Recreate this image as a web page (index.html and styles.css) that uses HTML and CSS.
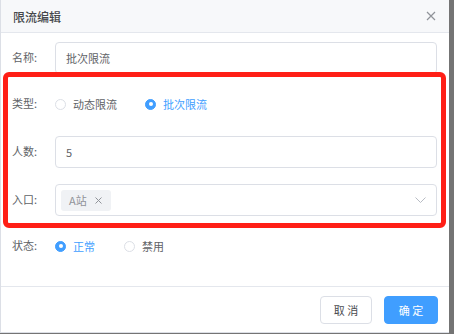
FILE: index.html
```html
<!DOCTYPE html>
<html lang="zh">
<head>
<meta charset="utf-8">
<link rel="stylesheet" href="styles.css">
</head>
<body>
<div class="page">
  <div class="dialog">
    <div class="header">
      <span class="title">限流编辑</span>
      <svg class="close" width="10" height="10" viewBox="0 0 10 10"><path d="M1 1L9 9M9 1L1 9" stroke="#909399" stroke-width="1.2" fill="none"/></svg>
    </div>
    <div class="body">
      <div class="row r-name">
        <label class="lbl">名称:</label>
        <div class="input">批次限流</div>
      </div>
      <div class="row r-type">
        <label class="lbl">类型:</label>
        <div class="radios">
          <span class="radio"><span class="dot"></span><span class="rtext">动态限流</span></span>
          <span class="radio on"><span class="dot"></span><span class="rtext">批次限流</span></span>
        </div>
      </div>
      <div class="row r-num">
        <label class="lbl">人数:</label>
        <div class="input">5</div>
      </div>
      <div class="row r-entry">
        <label class="lbl">入口:</label>
        <div class="input select">
          <span class="tag">A站<svg class="tagx" width="7" height="7" viewBox="0 0 7 7"><path d="M0.5 0.5L6.5 6.5M6.5 0.5L0.5 6.5" stroke="#909399" stroke-width="1" fill="none"/></svg></span>
          <svg class="chev" width="11" height="6" viewBox="0 0 11 6"><path d="M0.5 0.5L5.5 5.5L10.5 0.5" stroke="#b8bcc4" stroke-width="1" fill="none"/></svg>
        </div>
      </div>
      <div class="row r-status">
        <label class="lbl">状态:</label>
        <div class="radios">
          <span class="radio on"><span class="dot"></span><span class="rtext">正常</span></span>
          <span class="radio"><span class="dot"></span><span class="rtext">禁用</span></span>
        </div>
      </div>
    </div>
    <div class="footer">
      <button class="btn">取 消</button>
      <button class="btn primary">确 定</button>
    </div>
    <div class="mark"></div>
  </div>
</div>
</body>
</html>
```
FILE: styles.css
```css
* { box-sizing: border-box; }
html, body { margin: 0; padding: 0; }
body {
  font-family: "Noto Sans CJK SC", "Noto Sans", sans-serif;
  font-size: 11px;
  color: #606266;
}
.page {
  display: flex;
  width: 454px;
  height: 334px;
  background: #747474;
}
.dialog {
  position: relative;
  width: 449px;
  height: 333px;
  background: #fff;
  border-left: 1px solid #dcdfe6;
  border-bottom: 1px solid #dcdfe6;
  display: flex;
  flex-direction: column;
}
.header {
  height: 33px;
  background: #f7f8fa;
  border-bottom: 1px solid #e4e7ed;
  display: flex;
  align-items: center;
  justify-content: space-between;
  padding: 0 13px 0 12px;
}
.title {
  font-size: 12px;
  color: #45474b;
  font-weight: 500;
}
.close { display: block; }
.body {
  padding: 9px 12px 0 11px;
  display: flex;
  flex-direction: column;
}
.row {
  display: flex;
  align-items: center;
}
.lbl {
  width: 43px;
  flex: none;
  color: #606266;
  padding-bottom: 3px;
}
.r-name { height: 32px; margin-bottom: 14px; }
.r-type { height: 32px; margin-bottom: 16px; }
.r-num { height: 32px; margin-bottom: 16px; }
.r-entry { height: 32px; margin-bottom: 16px; }
.r-status { height: 28px; }
.input {
  flex: 1;
  height: 32px;
  border: 1px solid #dcdfe6;
  border-radius: 4px;
  display: flex;
  align-items: center;
  padding: 0 10px;
  color: #606266;
}
.select {
  padding: 0 10px 0 5px;
  justify-content: space-between;
}
.tag {
  display: flex;
  align-items: center;
  height: 21px;
  width: 50px;
  padding-left: 8px;
  background: #f0f2f5;
  border-radius: 3px;
  color: #909399;
  font-size: 11px;
}
.tagx { margin-left: 8px; }
.chev { display: block; }
.radios { display: flex; align-items: center; }
.radio {
  display: flex;
  align-items: center;
  margin-right: 28px;
  color: #606266;
}
.dot {
  width: 11px;
  height: 11px;
  border-radius: 50%;
  border: 1px solid #dcdfe6;
  background: #fff;
  margin-right: 7px;
  position: relative;
  flex: none;
}
.radio.on .dot {
  background: #409eff;
  border-color: #409eff;
}
.radio.on .dot::after {
  content: "";
  position: absolute;
  left: 50%;
  top: 50%;
  width: 4px;
  height: 4px;
  margin: -2px 0 0 -2px;
  border-radius: 50%;
  background: #fff;
}
.radio.on .rtext { color: #409eff; }
.r-status .radio { margin-right: 29px; }
.footer {
  margin-top: auto;
  border-top: 1px solid #e4e7ed;
  padding: 9px 11px 8px 0;
  display: flex;
  justify-content: flex-end;
  gap: 12px;
}
.btn {
  height: 28px;
  width: 52px;
  border: 1px solid #dcdfe6;
  border-radius: 4px;
  background: #fff;
  color: #4a4c50;
  font-family: "Noto Sans CJK SC", "Noto Sans", sans-serif;
  font-size: 11px;
  padding: 0;
}
.btn.primary {
  width: 54px;
  background: #409eff;
  border-color: #409eff;
  color: #fff;
}
.mark {
  position: absolute;
  left: 2px;
  top: 72px;
  width: 443px;
  height: 156px;
  border: 5px solid #ff1f16;
  border-radius: 6px;
  pointer-events: none;
}
```
